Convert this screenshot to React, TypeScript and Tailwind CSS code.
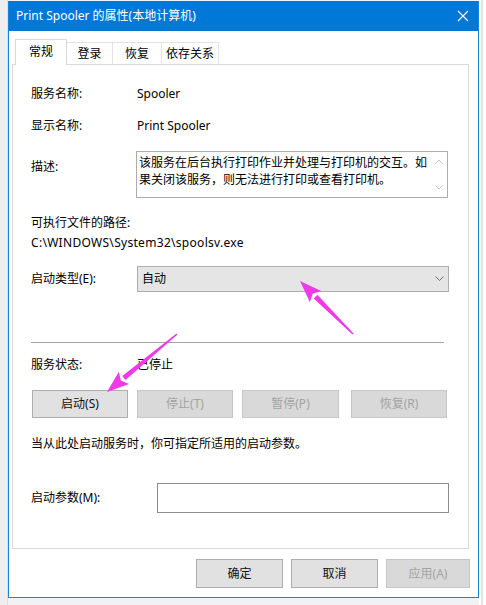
import React from "react";

const font = {
  fontFamily: '"Noto Sans", "Noto Sans CJK SC", sans-serif',
};

type BtnProps = { label: string; width: string; disabled?: boolean; height?: string };

function WinButton({ label, width, disabled, height = "h-[28px]" }: BtnProps) {
  return (
    <div
      className={`${width} ${height} flex items-center justify-center border text-[12px] leading-[16px] ${
        disabled
          ? "bg-[#d9d9d9] border-[#c6c6c6] text-[#a3a3a3]"
          : "bg-[#e1e1e1] border-[#adadad] text-[#111]"
      }`}
    >
      {label}
    </div>
  );
}

function Row({ label, children }: { label: string; children: React.ReactNode }) {
  return (
    <div className="flex items-center">
      <div className="w-[106px] shrink-0">{label}</div>
      {children}
    </div>
  );
}

function Arrow({ tip, tail }: { tip: [number, number]; tail: [number, number] }) {
  const dx = tail[0] - tip[0];
  const dy = tail[1] - tip[1];
  const len = Math.hypot(dx, dy);
  const ux = dx / len;
  const uy = dy / len;
  const headLen = 22;
  const half = 8;
  const bx = tip[0] + ux * headLen;
  const by = tip[1] + uy * headLen;
  const px = -uy;
  const py = ux;
  const head = `${tip[0]},${tip[1]} ${bx + px * half},${by + py * half} ${bx + ux * -4},${by + uy * -4} ${bx - px * half},${by - py * half}`;
  const shaft = `${bx + px * 2.6},${by + py * 2.6} ${tail[0] + px * 0.8},${tail[1] + py * 0.8} ${tail[0] - px * 0.8},${tail[1] - py * 0.8} ${bx - px * 2.6},${by - py * 2.6}`;
  return (
    <g fill="#ee3be8">
      <polygon points={shaft} />
      <polygon points={head} />
    </g>
  );
}

export default function App() {
  return (
    <div className="relative w-[486px] h-[605px] overflow-hidden bg-[#f2f2f2] flex text-black" style={font}>
      {/* background window strip, left */}
      <div className="w-[8px] h-full bg-[#eceef0] border-r border-[#cfe3f3]" />

      {/* dialog */}
      <div className="w-[471px] h-[597px] mt-[1px] flex flex-col border-x border-b border-[#1883d7] bg-white">
        <div className="h-[30px] shrink-0 bg-[#0078d7] flex items-center justify-between pl-[7px] pr-[9px] text-white text-[12px]">
          <span>Print Spooler 的属性(本地计算机)</span>
          <svg width="12" height="12" viewBox="0 0 12 12">
            <path d="M1 1 L11 11 M11 1 L1 11" stroke="#ffffff" strokeWidth="1.2" />
          </svg>
        </div>

        <div className="flex-1 flex flex-col pt-[8px] text-[12px] leading-[16px]">
          {/* tabs */}
          <div className="flex items-end h-[25px] ml-[6px]">
            <div className="relative z-10 -mb-px h-[26px] w-[52px] border border-b-0 border-[#d9d9d9] bg-white flex items-center justify-center pb-[2px]">
              常规
            </div>
            <div className="-ml-px h-[22px] w-[47px] border border-b-0 border-[#e3e3e3] bg-white flex items-center justify-center">
              登录
            </div>
            <div className="-ml-px h-[22px] w-[50px] border border-b-0 border-[#e3e3e3] bg-white flex items-center justify-center">
              恢复
            </div>
            <div className="-ml-px h-[22px] w-[58px] border border-b-0 border-[#e3e3e3] bg-white flex items-center justify-center">
              依存关系
            </div>
          </div>

          {/* panel */}
          <div className="ml-[3px] w-[457px] h-[485px] border border-[#d9d9d9] bg-white flex flex-col pt-[21px] pl-[18px] pr-[19px]">
            <Row label="服务名称:">
              <span>Spooler</span>
            </Row>
            <div className="mt-[16px]">
              <Row label="显示名称:">
                <span>Print Spooler</span>
              </Row>
            </div>

            <div className="mt-[17px] flex items-start">
              <div className="w-[105px] shrink-0 mt-[8px]">描述:</div>
              <div className="w-[312px] h-[47px] border border-[#abadb3] bg-white flex">
                <div className="flex-1 pl-[2px] pt-[2px] leading-[17px]">
                  该服务在后台执行打印作业并处理与打印机的交互。如果关闭该服务，则无法进行打印或查看打印机。
                </div>
                <div className="w-[16px] flex flex-col items-center justify-between py-[7px]">
                  <svg width="8" height="5" viewBox="0 0 8 5">
                    <path d="M0.5 4.5 L4 1 L7.5 4.5" stroke="#c2c2c2" fill="none" />
                  </svg>
                  <svg width="8" height="5" viewBox="0 0 8 5">
                    <path d="M0.5 0.5 L4 4 L7.5 0.5" stroke="#c2c2c2" fill="none" />
                  </svg>
                </div>
              </div>
            </div>

            <div className="mt-[17px]">可执行文件的路径:</div>
            <div className="mt-[4px] tracking-[0.3px]">C:\WINDOWS\System32\spoolsv.exe</div>

            <div className="mt-[15px]">
              <Row label="启动类型(E):">
                <div className="w-[312px] h-[26px] border border-[#adadad] bg-[#e5e5e5] flex items-center justify-between pl-[4px] pr-[4px]">
                  <span>自动</span>
                  <svg width="9" height="6" viewBox="0 0 9 6">
                    <path d="M0.5 0.5 L4.5 4.5 L8.5 0.5" stroke="#707070" fill="none" />
                  </svg>
                </div>
              </Row>
            </div>

            <div className="mt-[50px] mr-[5px] h-px bg-[#a5a5a5]" />

            <div className="mt-[14px]">
              <Row label="服务状态:">
                <span>已停止</span>
              </Row>
            </div>

            <div className="mt-[17px] flex ml-[1px]">
              <WinButton label="启动(S)" width="w-[96px]" />
              <div className="ml-[9px]">
                <WinButton label="停止(T)" width="w-[96px]" disabled />
              </div>
              <div className="ml-[9px]">
                <WinButton label="暂停(P)" width="w-[97px]" disabled />
              </div>
              <div className="ml-[12px]">
                <WinButton label="恢复(R)" width="w-[96px]" disabled />
              </div>
            </div>

            <div className="mt-[18px]">当从此处启动服务时，你可指定所适用的启动参数。</div>

            <div className="mt-[31px] flex items-center">
              <div className="w-[126px] shrink-0">启动参数(M):</div>
              <div className="w-[292px] h-[30px] border border-[#8c8c8c] bg-white" />
            </div>
          </div>

          {/* footer buttons */}
          <div className="mt-[10px] flex pl-[187px]">
            <WinButton label="确定" width="w-[87px]" height="h-[29px]" />
            <div className="ml-[8px]">
              <WinButton label="取消" width="w-[87px]" height="h-[29px]" />
            </div>
            <div className="ml-[8px]">
              <WinButton label="应用(A)" width="w-[84px]" height="h-[29px]" disabled />
            </div>
          </div>
        </div>
      </div>

      {/* background window strip, right */}
      <div className="w-[7px] h-full bg-white flex">
        <div className="ml-[2px] w-[2px] h-full bg-[#e9e4da]" />
      </div>

      {/* annotation arrows */}
      <svg className="absolute inset-0 pointer-events-none" width="486" height="605" viewBox="0 0 486 605">
        <Arrow tip={[300, 281]} tail={[353, 334]} />
        <Arrow tip={[107, 392]} tail={[177, 334]} />
      </svg>
    </div>
  );
}
